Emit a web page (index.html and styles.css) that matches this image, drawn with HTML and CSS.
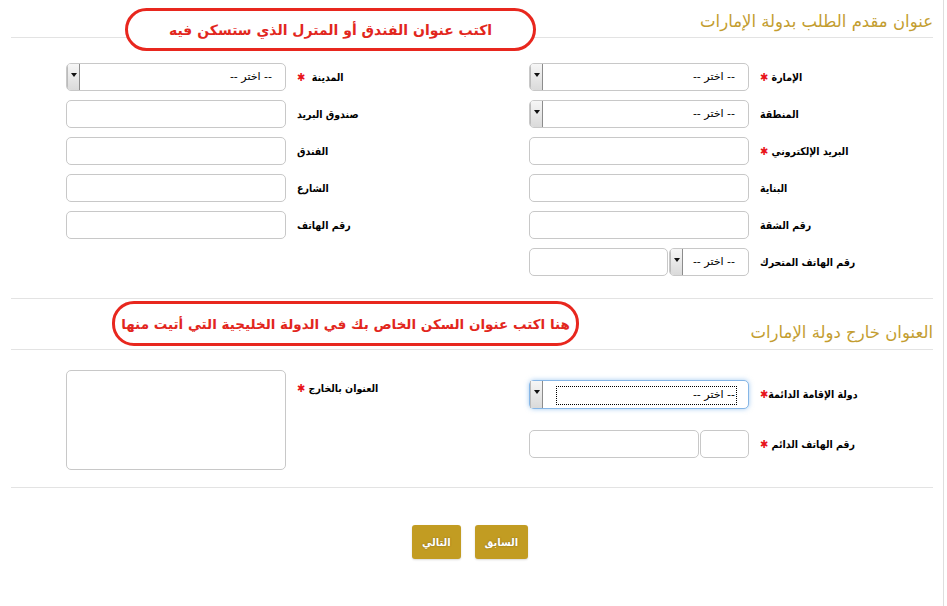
FILE: index.html
```html
<!DOCTYPE html>
<html lang="ar" dir="rtl">
<head>
  <meta charset="UTF-8" />
  <meta name="viewport" content="width=device-width, initial-scale=1.0"/>
  <title>عنوان مقدم الطلب</title>
  <link rel="stylesheet" href="styles.css">
</head>
<body>
<div class="page">

  <!-- العنوان داخل الدولة -->
  <div class="section section-local">
    <h2 class="section-title">عنوان مقدم الطلب بدولة الإمارات</h2>

    <div class="form-grid">
      <div class="col">
        <div class="row">
          <label class="lbl">الإمارة <span class="req">✱</span></label>
          <div class="select"><span class="val">-- اختر --</span><span class="arrow"></span></div>
        </div>
        <div class="row">
          <label class="lbl">المنطقة</label>
          <div class="select"><span class="val">-- اختر --</span><span class="arrow"></span></div>
        </div>
        <div class="row">
          <label class="lbl">البريد الإلكتروني <span class="req">✱</span></label>
          <input type="text" class="field">
        </div>
        <div class="row">
          <label class="lbl">البناية</label>
          <input type="text" class="field">
        </div>
        <div class="row">
          <label class="lbl">رقم الشقة</label>
          <input type="text" class="field">
        </div>
        <div class="row">
          <label class="lbl">رقم الهاتف المتحرك</label>
          <div class="pair">
            <div class="select select-code"><span class="val">-- اختر --</span><span class="arrow"></span></div>
            <input type="text" class="field field-phone">
          </div>
        </div>
      </div>

      <div class="col">
        <div class="row">
          <label class="lbl">المدينة &nbsp;<span class="req">✱</span></label>
          <div class="select"><span class="val">-- اختر --</span><span class="arrow"></span></div>
        </div>
        <div class="row">
          <label class="lbl">صندوق البريد</label>
          <input type="text" class="field">
        </div>
        <div class="row">
          <label class="lbl">الفندق</label>
          <input type="text" class="field">
        </div>
        <div class="row">
          <label class="lbl">الشارع</label>
          <input type="text" class="field">
        </div>
        <div class="row">
          <label class="lbl">رقم الهاتف</label>
          <input type="text" class="field">
        </div>
      </div>
    </div>
  </div>

  <!-- العنوان خارج الدولة -->
  <div class="section section-abroad">
    <h2 class="section-title">العنوان خارج دولة الإمارات</h2>

    <div class="form-grid">
      <div class="col col-abroad">
        <div class="row">
          <label class="lbl">دولة الإقامة الدائمة<span class="req">✱</span></label>
          <div class="select focus"><span class="val">-- اختر --</span><span class="arrow"></span></div>
        </div>
        <div class="row">
          <label class="lbl">رقم الهاتف الدائم <span class="req">✱</span></label>
          <div class="pair">
            <input type="text" class="field field-key">
            <input type="text" class="field field-number">
          </div>
        </div>
      </div>

      <div class="col">
        <div class="row row-top">
          <label class="lbl">العنوان بالخارج <span class="req">✱</span></label>
          <textarea class="field area"></textarea>
        </div>
      </div>
    </div>
  </div>

  <div class="actions">
    <button class="btn">السابق</button>
    <button class="btn">التالي</button>
  </div>

  <!-- ملاحظات توضيحية فوق الصفحة -->
  <div class="note note-local">اكتب عنوان الفندق أو المترل الذي ستسكن فيه</div>
  <div class="note note-abroad">هنا اكتب عنوان السكن الخاص بك في الدولة الخليجية التي أتيت منها</div>
</div>
</body>
</html>
```

FILE: styles.css
```css
* {
  box-sizing: border-box;
}

body {
  margin: 0;
  background: #fff;
  font-family: Tahoma, "DejaVu Sans", sans-serif;
  color: #000;
}

.page {
  position: relative;
  height: 606px;
  margin-right: 3px;
  padding-top: 4px;
  border-right: 1px solid #dedede;
}

.section {
  margin: 0 10px 0 11px;
  border-bottom: 1px solid #e3e3e3;
}

.section-title {
  margin: 0;
  padding-top: 3px;
  padding-bottom: 1px;
  font-size: 16.5px;
  line-height: 29px;
  font-weight: normal;
  color: #c39d2f;
  border-bottom: 1px solid #e3e3e3;
}

.section-local {
  padding-bottom: 22px;
}

.section-abroad {
  padding-bottom: 17px;
}

.section-abroad .section-title {
  padding-top: 20px;
  padding-bottom: 2px;
  line-height: 28px;
}

.form-grid {
  display: flex;
  gap: 134px;
  margin-top: 25px;
  padding-right: 75px;
}

.section-abroad .form-grid {
  margin-top: 20px;
}

.col {
  display: flex;
  flex-direction: column;
  gap: 9px;
}

.col-abroad {
  padding-top: 10px;
  gap: 22px;
}

.row {
  display: flex;
  align-items: center;
  gap: 9px;
  height: 28px;
}

.row-top {
  align-items: flex-start;
  height: auto;
}

.row-top .lbl {
  padding-top: 10px;
}

.lbl {
  width: 100px;
  padding-left: 2px;
  text-align: left;
  font-family: "DejaVu Sans Condensed", "DejaVu Sans", sans-serif;
  font-size: 10.5px;
  line-height: 16px;
  font-weight: bold;
  white-space: nowrap;
}

.req {
  color: #e8141a;
  font-size: 11px;
}

.field {
  width: 220px;
  height: 28px;
  margin: 0;
  border: 1px solid #c8c8c8;
  border-radius: 5px;
  background: #fff;
  font: inherit;
  outline: none;
}

.area {
  height: 100px;
  resize: none;
}

.pair {
  display: flex;
  gap: 1px;
  width: 220px;
}

.field-phone {
  width: 139px;
}

.field-key {
  width: 49px;
}

.field-number {
  width: 170px;
}

.select {
  display: flex;
  width: 220px;
  height: 28px;
  border: 1px solid #c8c8c8;
  border-radius: 5px;
  background: #fff;
  overflow: hidden;
  font-size: 11px;
}

.select-code {
  width: 80px;
}

.select .val {
  flex: 1;
  padding-right: 13px;
  line-height: 26px;
  text-align: right;
}

.select .arrow {
  position: relative;
  width: 14px;
  background: linear-gradient(#f6f6f6, #dadada);
  border-left: 1px solid #bbb;
  border-right: 1px solid #fff;
  box-shadow: inset -1px 0 0 #8c8c8c;
}

.select .arrow::after {
  content: "";
  position: absolute;
  top: 9px;
  left: 3px;
  border-top: 4px solid #111;
  border-left: 3px solid transparent;
  border-right: 3px solid transparent;
}

.select.focus {
  height: 29px;
  border-color: #86b6e6;
  box-shadow: 0 0 5px rgba(90, 160, 230, 0.55);
  overflow: visible;
}

.select.focus .val {
  margin: 6px 12px 4px 13px;
  padding-right: 1px;
  line-height: 15px;
  outline: 1px dotted #000;
}

.actions {
  display: flex;
  justify-content: center;
  gap: 14px;
  margin-top: 37px;
  padding-right: 3px;
}

.btn {
  height: 34px;
  padding: 0 10px;
  border: none;
  border-radius: 3px;
  background: #c29c22;
  color: #fff;
  font-family: "DejaVu Sans Condensed", "DejaVu Sans", sans-serif;
  font-size: 11px;
  font-weight: bold;
  text-shadow: 0 0 2px rgba(0, 0, 0, 0.35);
  box-shadow: 0 1px 2px rgba(0, 0, 0, 0.15);
  cursor: pointer;
}

.note {
  position: absolute;
  display: flex;
  align-items: center;
  justify-content: center;
  border: 3px solid #e8271e;
  border-radius: 22px;
  background: #fff;
  color: #e2261d;
  font-family: "DejaVu Serif", "DejaVu Sans", serif;
  font-weight: bold;
  font-size: 14px;
  white-space: nowrap;
}

.note-local {
  top: 8px;
  left: 125px;
  width: 411px;
  height: 43px;
}

.note-abroad {
  top: 301px;
  left: 112px;
  width: 467px;
  height: 45px;
  font-size: 13.5px;
}
```
